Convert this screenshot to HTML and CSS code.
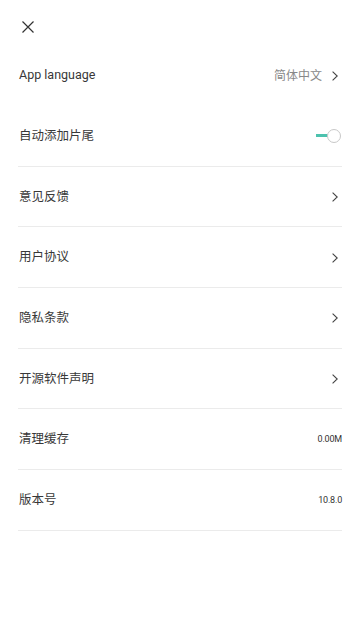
FILE: index.html
```html
<!DOCTYPE html>
<html lang="zh-CN">
<head>
<meta charset="utf-8">
<meta name="viewport" content="width=device-width, initial-scale=1">
<title>设置</title>
<link rel="stylesheet" href="styles.css">
</head>
<body>
<div class="page">
  <header class="header">
    <svg class="close" width="12" height="12" viewBox="0 0 12 12" aria-hidden="true">
      <path d="M0.5 0.5 L11.5 11.5 M11.5 0.5 L0.5 11.5" stroke="#333" stroke-width="1.2" fill="none"/>
    </svg>
  </header>
  <ul class="list">
    <li class="row row-first">
      <span class="label">App language</span>
      <span class="right">
        <span class="value-gray">简体中文</span>
        <svg class="chev" width="6" height="10" viewBox="0 0 6 10" aria-hidden="true"><path d="M0.6 0.6 L5.2 5 L0.6 9.4" stroke="#444" stroke-width="1.1" fill="none"/></svg>
      </span>
    </li>
    <li class="row">
      <span class="label">自动添加片尾</span>
      <span class="toggle"><span class="toggle-bar"></span><span class="toggle-knob"></span></span>
    </li>
    <li class="row">
      <span class="label">意见反馈</span>
      <span class="right"><svg class="chev" width="6" height="10" viewBox="0 0 6 10" aria-hidden="true"><path d="M0.6 0.6 L5.2 5 L0.6 9.4" stroke="#444" stroke-width="1.1" fill="none"/></svg></span>
    </li>
    <li class="row">
      <span class="label">用户协议</span>
      <span class="right"><svg class="chev" width="6" height="10" viewBox="0 0 6 10" aria-hidden="true"><path d="M0.6 0.6 L5.2 5 L0.6 9.4" stroke="#444" stroke-width="1.1" fill="none"/></svg></span>
    </li>
    <li class="row">
      <span class="label">隐私条款</span>
      <span class="right"><svg class="chev" width="6" height="10" viewBox="0 0 6 10" aria-hidden="true"><path d="M0.6 0.6 L5.2 5 L0.6 9.4" stroke="#444" stroke-width="1.1" fill="none"/></svg></span>
    </li>
    <li class="row">
      <span class="label">开源软件声明</span>
      <span class="right"><svg class="chev" width="6" height="10" viewBox="0 0 6 10" aria-hidden="true"><path d="M0.6 0.6 L5.2 5 L0.6 9.4" stroke="#444" stroke-width="1.1" fill="none"/></svg></span>
    </li>
    <li class="row">
      <span class="label">清理缓存</span>
      <span class="value-small">0.00M</span>
    </li>
    <li class="row">
      <span class="label">版本号</span>
      <span class="value-small">10.8.0</span>
    </li>
  </ul>
</div>
</body>
</html>
```
FILE: styles.css
```css
* { box-sizing: border-box; }
html, body {
  margin: 0;
  padding: 0;
  background: #fff;
}
body {
  font-family: Roboto, "Noto Sans CJK SC", "Noto Sans", sans-serif;
  color: #333;
  width: 360px;
  height: 640px;
  overflow: hidden;
}
.page {
  padding: 0 18px;
}
.header {
  height: 45px;
  padding-top: 21px;
  padding-left: 4px;
}
.close { display: block; }
.list {
  list-style: none;
  margin: 0;
  padding: 0;
}
.row {
  display: flex;
  align-items: center;
  justify-content: space-between;
  height: 60.67px;
  border-bottom: 1px solid #ebebeb;
  padding-left: 1px;
  padding-top: 1px;
}
.row-first {
  height: 60px;
  border-bottom: none;
}
.row-first + .row {
  height: 61.67px;
  padding-top: 1px;
}
.label {
  font-size: 12.5px;
  line-height: 1;
  color: #383838;
}
.right {
  display: flex;
  align-items: center;
  gap: 10px;
  padding-right: 4px;
}
.value-gray {
  font-size: 12px;
  color: #888;
  line-height: 1;
}
.chev { display: block; }
.value-small {
  font-size: 9px;
  line-height: 1;
  color: #333;
  letter-spacing: -0.2px;
}
.toggle {
  display: flex;
  align-items: center;
  padding-right: 1px;
}
.toggle-bar {
  width: 12px;
  height: 3px;
  background: #4dc2ae;
}
.toggle-knob {
  width: 14px;
  height: 14px;
  border-radius: 50%;
  border: 1px solid #c8c8c8;
  background: #fff;
  margin-left: -1px;
}
```
